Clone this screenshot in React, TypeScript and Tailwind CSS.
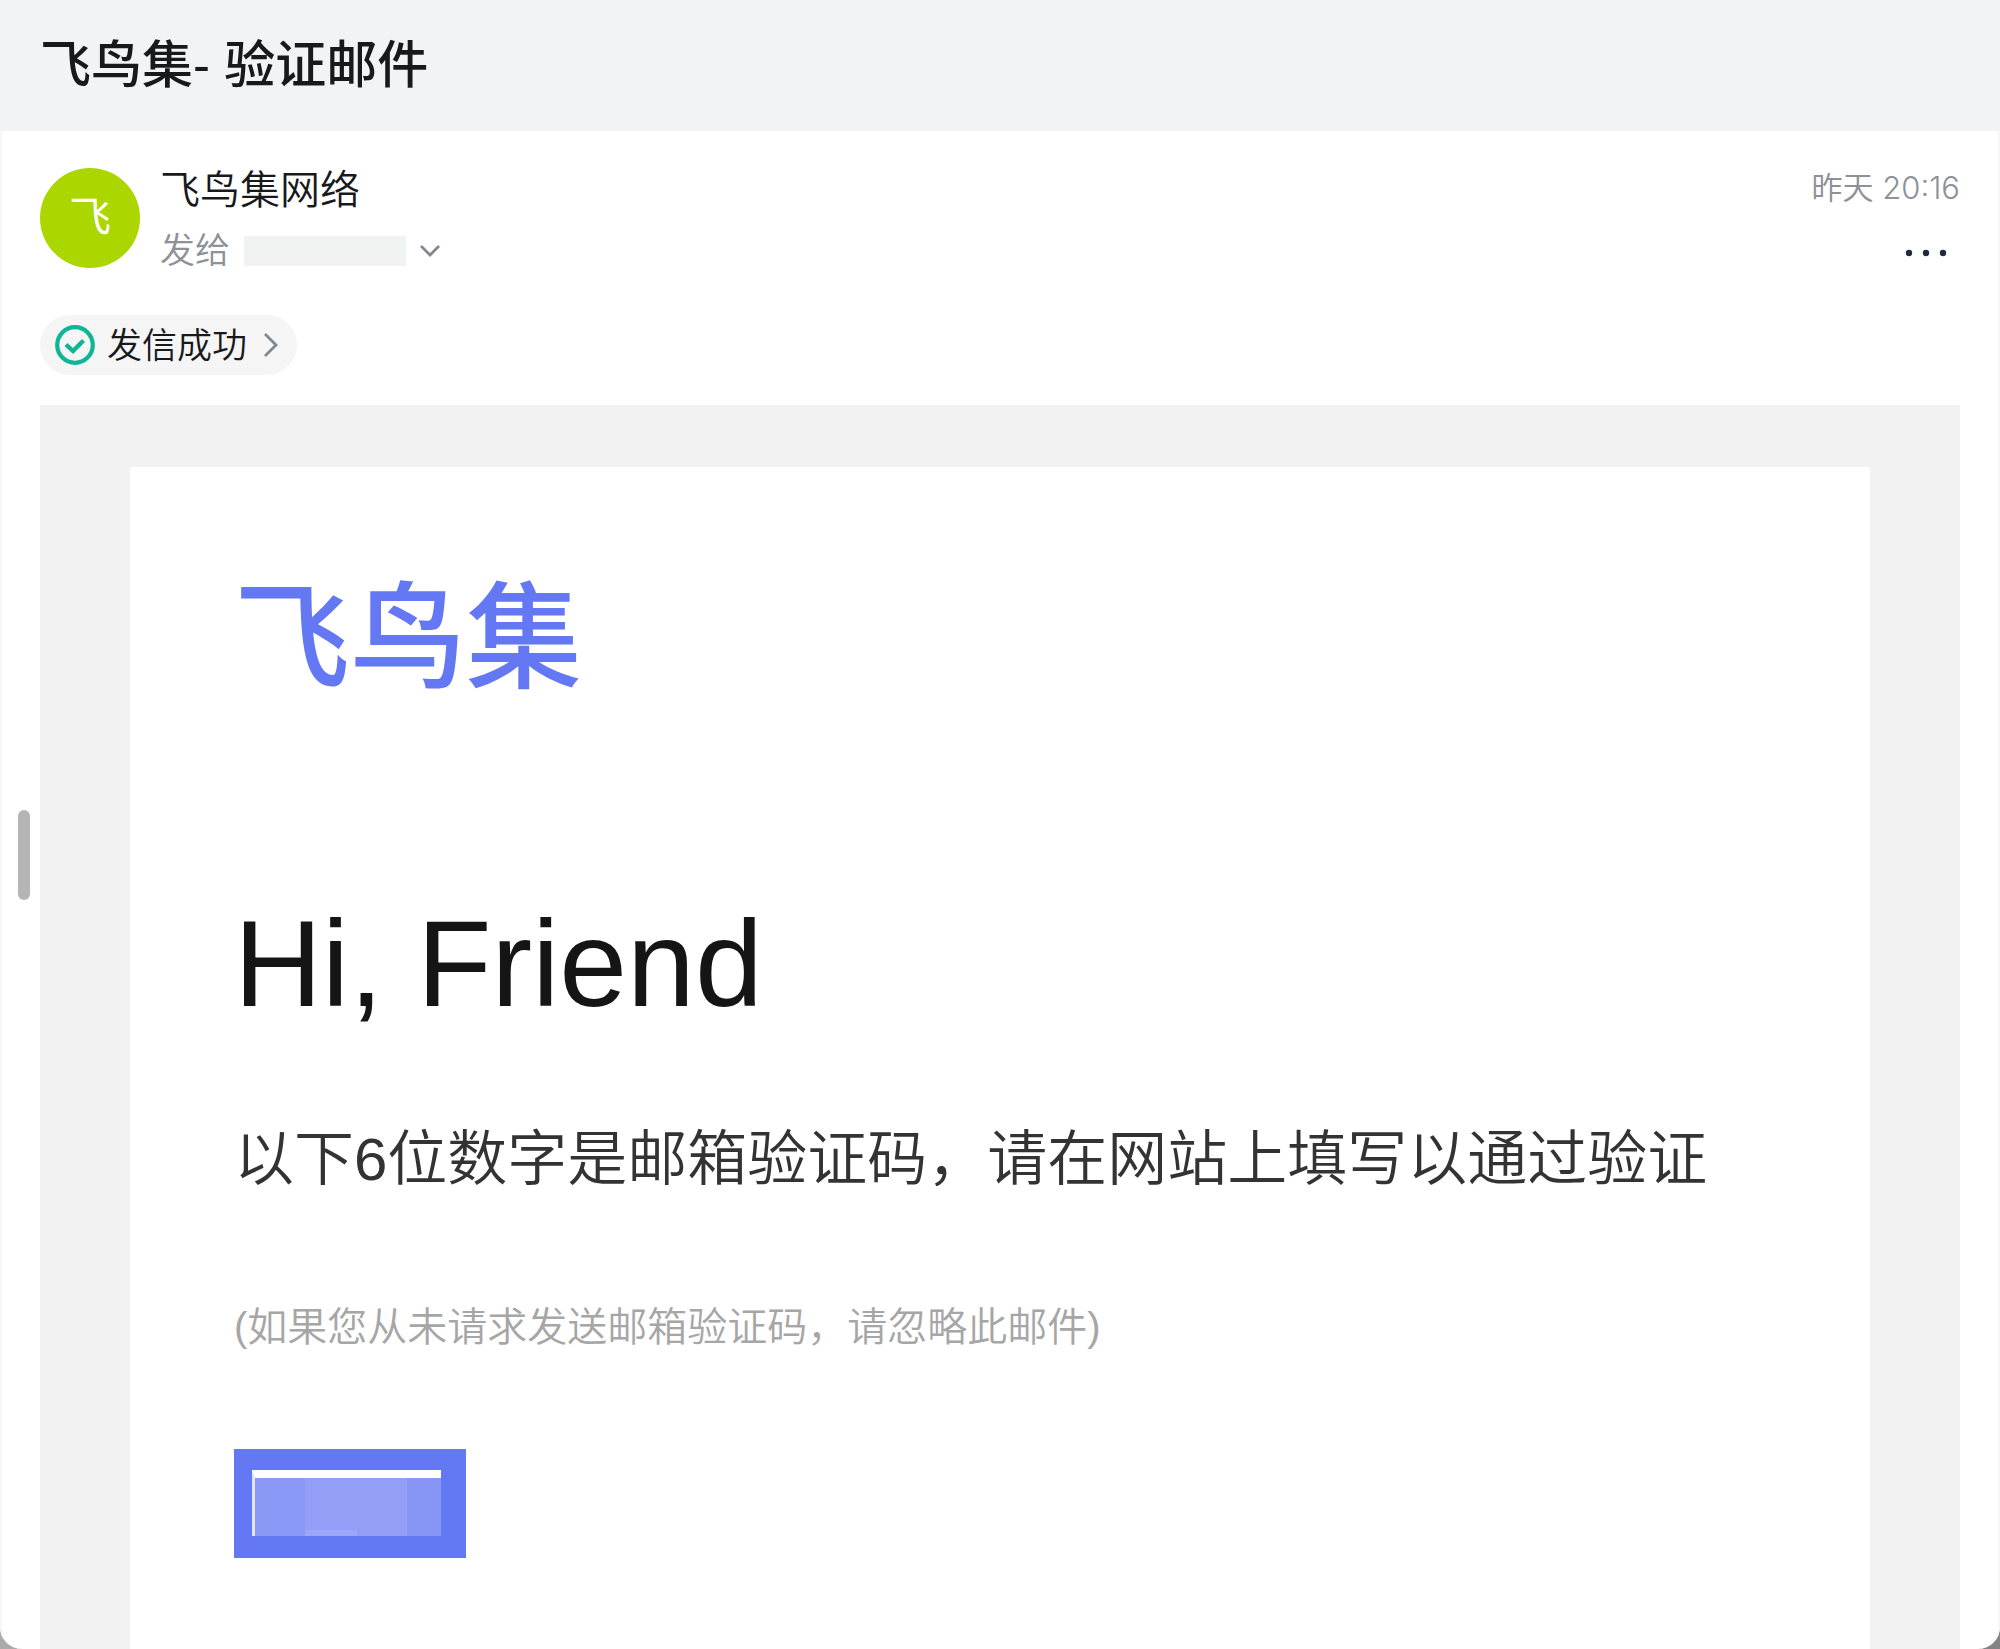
import { ReactNode } from "react";

const Dots = () => (
  <svg viewBox="0 0 44 8" className="h-2 w-11" fill="#1f2a3a" aria-hidden="true">
    <circle cx="5" cy="4" r="3.2" />
    <circle cx="22" cy="4" r="3.2" />
    <circle cx="39" cy="4" r="3.2" />
  </svg>
);

const CheckCircle = () => (
  <svg viewBox="0 0 40 40" className="size-10" fill="none" stroke="#0fb595" aria-hidden="true">
    <circle cx="20" cy="20" r="17.8" strokeWidth="4.2" />
    <path d="M11 19.5l7 6.5 10.5-10.5" strokeWidth="4.4" />
  </svg>
);

const SubjectBar = () => (
  <header className="flex h-[131px] items-center bg-[#f1f3f5] px-10">
    <h1 className="text-[51px] leading-none font-medium text-[#17191c]">飞鸟集- 验证邮件</h1>
  </header>
);

const Sender = () => (
  <section className="flex items-start px-10 pt-[37px]">
    <div className="flex size-[100px] shrink-0 items-center justify-center rounded-full bg-[#acd600] text-[42px] leading-none text-white">
      飞
    </div>
    <div className="ml-5 flex flex-1 flex-col">
      <span className="h-11 text-[40px] leading-[44px] font-[350] text-[#17191c]">飞鸟集网络</span>
      <div className="mt-[17px] flex h-11 items-center">
        <span className="text-[35px] leading-[44px] font-[350] text-[#8d9198]">发给</span>
        <span className="ml-3.5 h-[30px] w-[162px] bg-[#f1f2f2]" />
        <button type="button" aria-label="展开收件人" className="ml-3 p-0.5">
          <svg viewBox="0 0 20 12" className="h-3 w-5" fill="none" stroke="#81868f" strokeWidth="2.8" aria-hidden="true">
            <path d="M1 1l9 9 9-9" />
          </svg>
        </button>
      </div>
    </div>
    <div className="flex flex-col items-end">
      <time className="h-10 font-['Inter','Noto_Sans_CJK_SC',sans-serif] text-[31px] leading-10 font-[350] text-[#8d9198]">
        昨天 20:16
      </time>
      <button type="button" aria-label="更多" className="mt-6 mr-3 flex h-[42px] items-center">
        <Dots />
      </button>
    </div>
  </section>
);

const StatusChip = () => (
  <button
    type="button"
    className="mt-[41px] ml-10 flex h-[60px] items-center self-start rounded-full bg-[#f5f5f5] pr-[18px] pl-[15px] text-[35px] leading-none font-[350] text-[#17191c]"
  >
    <CheckCircle />
    <span className="ml-3">发信成功</span>
    <svg viewBox="0 0 16 24" className="ml-4 h-6 w-4" fill="none" stroke="#81868f" strokeWidth="2.8" aria-hidden="true">
      <path d="M2 1l11 11L2 23" />
    </svg>
  </button>
);

// Masked code, drawn as flat colour blocks
const CodeBox = () => (
  <div className="mt-[98px] h-[109px] w-[232px] bg-[#6578f4] px-[18px] pt-[21px]">
    <div className="flex h-[66px] w-[189px] border-t-8 border-l-3 border-t-white border-l-[#dfe3fd]">
      <span className="w-[50px] bg-[#8a99f6]" />
      <span className="w-[52px] border-b-6 border-[#9ca8f7] bg-[#939ef6]" />
      <span className="w-[50px] bg-[#939ef6]" />
      <span className="flex-1 bg-[#8795f5]" />
    </div>
  </div>
);

const MailBody = ({ children }: { children: ReactNode }) => (
  <div className="mx-10 mt-[30px] flex flex-1 flex-col bg-[#f2f2f2] px-[90px] pt-[62px]">
    <article className="flex-1 bg-white px-[104px] pt-[114px] pb-[90px]">{children}</article>
  </div>
);

export default function App() {
  return (
    <div className="bg-[linear-gradient(to_right,#ababab,#858285)] font-['Liberation_Sans','Noto_Sans_CJK_SC',sans-serif]">
      <main className="relative flex min-h-screen flex-col rounded-b-[22px] bg-white shadow-[inset_2px_0_#f7f7f7,inset_-2px_0_#f7f7f7]">
        <SubjectBar />
        <Sender />
        <StatusChip />
        <MailBody>
          <h2 className="text-[116px] leading-none font-medium text-[#6578f4]">飞鸟集</h2>
          <p className="mt-[197px] text-[122px] leading-[140px] text-[#151515]">Hi, Friend</p>
          <p className="mt-[90px] text-[60px] leading-[72px] font-[350] text-[#333]">
            以下6位数字是邮箱验证码，请在网站上填写以通过验证
          </p>
          <p className="mt-[107px] text-[40px] leading-[48px] font-[350] text-[#a6a6a6]">
            (如果您从未请求发送邮箱验证码，请忽略此邮件)
          </p>
          <CodeBox />
        </MailBody>
        <div className="absolute top-[810px] left-[18px] h-[90px] w-3 rounded-full bg-[#b5b5b5]" />
      </main>
    </div>
  );
}
